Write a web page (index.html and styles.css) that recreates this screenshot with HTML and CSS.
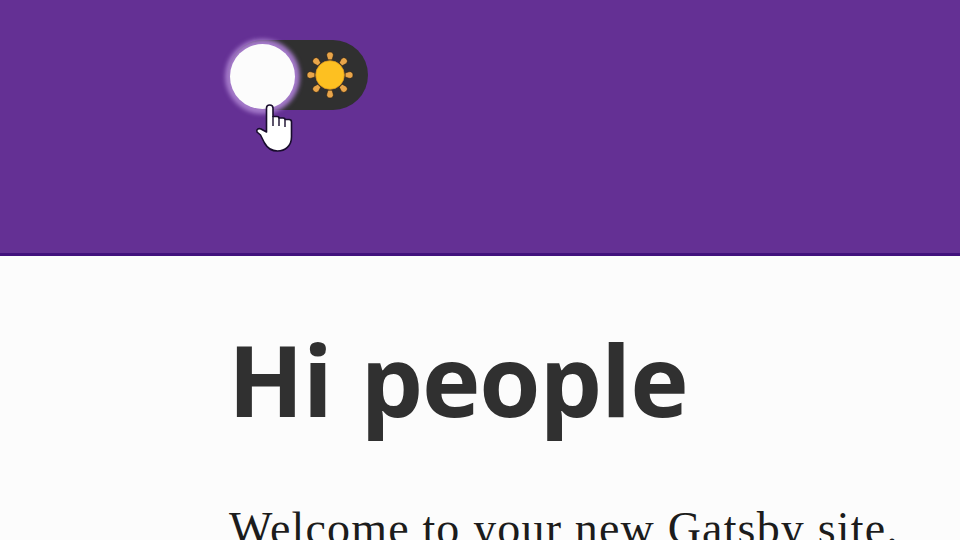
FILE: index.html
```html
<!DOCTYPE html>
<html lang="en">
<head>
<meta charset="utf-8">
<title>Gatsby Default Starter</title>
<link rel="stylesheet" href="styles.css">
</head>
<body>
<header class="header">
  <div class="toggle" role="switch" aria-checked="false">
    <span class="thumb"></span>
    <svg class="sun" viewBox="0 0 48 48" aria-hidden="true">
      <g fill="#e9a54a" stroke="#2a1a08" stroke-width=".5">
        <path id="ray" d="M24 1C26.500 1 27.800 3 27.200 5L26 8.800H22L20.800 5C20.200 3 21.500 1 24 1Z"/>
        <use href="#ray" transform="rotate(45 24 24)"/>
        <use href="#ray" transform="rotate(90 24 24)"/>
        <use href="#ray" transform="rotate(135 24 24)"/>
        <use href="#ray" transform="rotate(180 24 24)"/>
        <use href="#ray" transform="rotate(225 24 24)"/>
        <use href="#ray" transform="rotate(270 24 24)"/>
        <use href="#ray" transform="rotate(315 24 24)"/>
      </g>
      <circle cx="24" cy="24" r="14.300" fill="#fdc021" stroke="#dd9620" stroke-width=".8"/>
    </svg>
    <svg class="cursor" viewBox="0 0 38 50" aria-hidden="true">
      <path d="M11.500 29V5Q11.500 2 14.700 2T18 5V13.500H22Q24 13.500 24 15H28Q30 15 30 16.500H34Q36.500 16.500 36.500 19V34C36.500 43 30 48 22.500 48C16 48 12 44.500 9.500 40L5.500 32L2 29C1 26.500 3.500 25 6 26Z" fill="#fff" stroke="#180c2c" stroke-width="1.600" stroke-linejoin="round"/>
      <path d="M18 13V23M24 15V23M30 16.500V24" fill="none" stroke="#180c2c" stroke-width="1.400"/>
    </svg>
  </div>
</header>
<main class="content">
  <h1>Hi people</h1>
  <p>Welcome to your new Gatsby site.</p>
</main>
</body>
</html>
```
FILE: styles.css
```css
body{margin:0;height:540px;overflow:hidden;background:#fcfcfc;color:#303030}
.header{box-sizing:border-box;height:256px;padding:40px 0 0 228px;background:#643094;border-bottom:3px solid #42117d}
.toggle{position:relative;display:flex;align-items:center;box-sizing:border-box;width:140px;height:70px;border-radius:35px;background:#303030}
.thumb{width:65px;height:65px;margin:2px 0 0 2px;border-radius:50%;background:#fcfcfc;box-shadow:0 0 4px 5px #a57acb}
.sun{width:48px;height:48px;margin-left:11px}
.cursor{position:absolute;left:27px;top:63px;width:38px;height:50px}
.content{padding:77px 0 0 228px}
h1{margin:0;font:700 99px/92px "Open Sans",sans-serif;letter-spacing:-1.1px;word-spacing:4px;white-space:nowrap}
p{margin:78px 0 0 1px;color:#1c1c1c;font:46px/52px "Liberation Serif",serif;letter-spacing:1.17px;white-space:nowrap}
```
